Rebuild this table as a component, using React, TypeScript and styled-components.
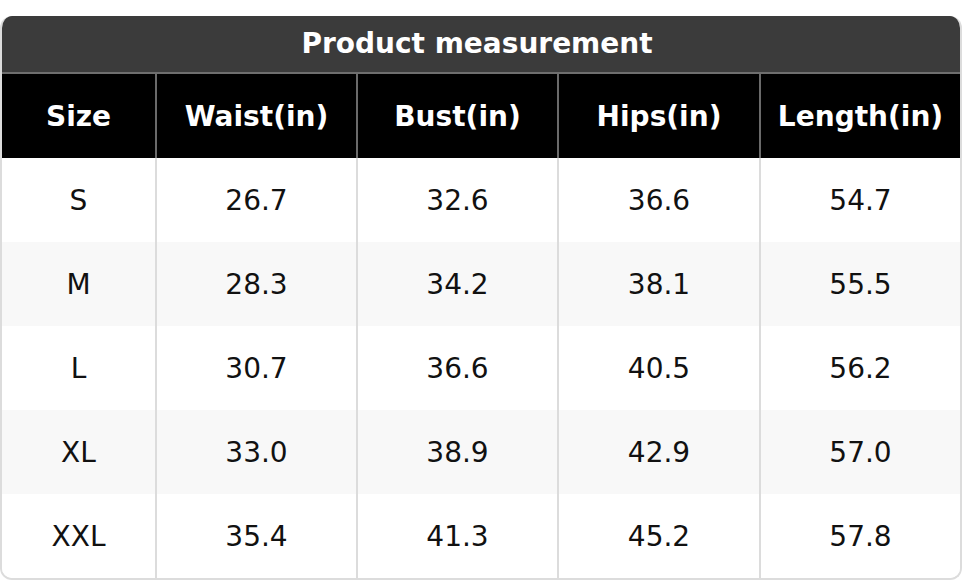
import React from 'react';
import styled, { createGlobalStyle } from 'styled-components';

const GlobalStyle = createGlobalStyle`
  html, body {
    margin: 0;
    padding: 0;
    background: #ffffff;
  }
  body {
    font-family: 'DejaVu Sans', Verdana, sans-serif;
  }
`;

const columns = ['Size', 'Waist(in)', 'Bust(in)', 'Hips(in)', 'Length(in)'];

const rows = [
  ['S', '26.7', '32.6', '36.6', '54.7'],
  ['M', '28.3', '34.2', '38.1', '55.5'],
  ['L', '30.7', '36.6', '40.5', '56.2'],
  ['XL', '33.0', '38.9', '42.9', '57.0'],
  ['XXL', '35.4', '41.3', '45.2', '57.8'],
];

const App: React.FC = () => {
  return (
    <Page>
      <GlobalStyle />
      <Card>
        <Title>Product measurement</Title>
        <HeadRow>
          {columns.map((c) => (
            <HeadCell key={c}>{c}</HeadCell>
          ))}
        </HeadRow>
        {rows.map((r, i) => (
          <BodyRow key={r[0]} striped={i % 2 === 1}>
            {r.map((v, j) => (
              <BodyCell key={j}>{v}</BodyCell>
            ))}
          </BodyRow>
        ))}
      </Card>
    </Page>
  );
};

export default App;

const Page = styled.div`
  padding-top: 16px;
  width: 962px;
`;

const Card = styled.div`
  border: 2px solid #dcdcdc;
  border-top: none;
  border-radius: 12px;
  overflow: hidden;
  background: #ffffff;
`;

const Title = styled.div`
  height: 55px;
  padding: 0 8px 1px 0;
  display: flex;
  align-items: center;
  justify-content: center;
  background: #3b3b3b;
  border-bottom: 2px solid #6e6e6e;
  color: #ffffff;
  font-weight: 700;
  font-size: 28px;
`;

const gridCols = '153px 201px 201px 202px 1fr';

const HeadRow = styled.div`
  display: grid;
  grid-template-columns: ${gridCols};
  height: 84px;
  background: #000000;
`;

const HeadCell = styled.div`
  display: flex;
  align-items: center;
  justify-content: center;
  color: #ffffff;
  font-weight: 700;
  font-size: 28px;
  & + & {
    border-left: 2px solid #6a6a6a;
  }
`;

const BodyRow = styled.div.withConfig({
  shouldForwardProp: (p) => p !== 'striped',
})<{ striped: boolean }>`
  display: grid;
  grid-template-columns: ${gridCols};
  height: 84px;
  background: ${(p) => (p.striped ? '#f8f8f8' : '#ffffff')};
`;

const BodyCell = styled.div`
  display: flex;
  align-items: center;
  justify-content: center;
  color: #111111;
  font-size: 28px;
  & + & {
    border-left: 2px solid #dcdcdc;
  }
`;
